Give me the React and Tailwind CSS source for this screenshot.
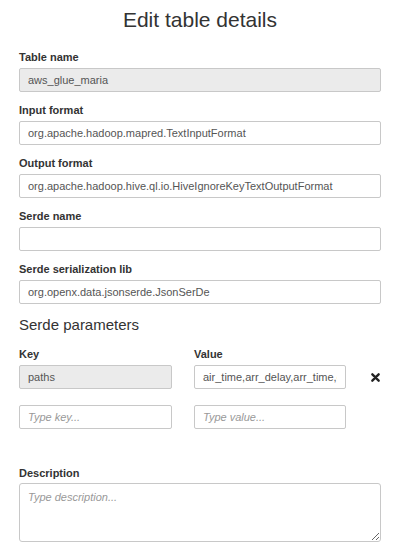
const FIELDS = [
  { label: 'Table name', value: 'aws_glue_maria', disabled: true },
  { label: 'Input format', value: 'org.apache.hadoop.mapred.TextInputFormat' },
  { label: 'Output format', value: 'org.apache.hadoop.hive.ql.io.HiveIgnoreKeyTextOutputFormat' },
  { label: 'Serde name', value: '' },
  { label: 'Serde serialization lib', value: 'org.openx.data.jsonserde.JsonSerDe' },
];

const inputBase =
  'block h-[24px] border border-[#c8c8c8] rounded-[2px] px-[8px] text-[11px] text-[#555] outline-none placeholder:italic placeholder:text-[#999]';

function Label({ children }) {
  return <div className="h-[14px] leading-[14px] text-[11px] font-bold text-[#333]">{children}</div>;
}

function CloseIcon() {
  return (
    <svg width="9" height="9" viewBox="0 0 10 10">
      <path d="M1.5 1.5 L8.5 8.5 M8.5 1.5 L1.5 8.5" stroke="#222" strokeWidth="2.6" strokeLinecap="round" />
    </svg>
  );
}

export default function App() {
  return (
    <div className="w-[400px] h-[546px] bg-white px-[19px] font-['Liberation_Sans',Arial,sans-serif] overflow-hidden">
      <h1 className="pt-[7px] h-[50px] text-center text-[21px] leading-[26px] text-[#333]">Edit table details</h1>

      {FIELDS.map((f) => (
        <div key={f.label} className="h-[53px]">
          <Label>{f.label}</Label>
          <input
            readOnly
            value={f.value}
            className={`${inputBase} mt-[4px] w-[362px] ${f.disabled ? 'bg-[#ebebeb]' : 'bg-white'}`}
          />
        </div>
      ))}

      <div className="h-[32px] text-[15px] leading-[20px] text-[#333]">Serde parameters</div>

      <div className="flex gap-[22px]">
        <div className="w-[153px]">
          <Label>Key</Label>
        </div>
        <div className="w-[152px]">
          <Label>Value</Label>
        </div>
      </div>

      <div className="mt-[4px] flex items-center gap-[22px]">
        <input readOnly value="paths" className={`${inputBase} w-[153px] bg-[#ebebeb]`} />
        <input readOnly value="air_time,arr_delay,arr_time,carrier,dep_delay" className={`${inputBase} w-[152px] bg-white`} />
        <div className="ml-[3px] flex items-center">
          <CloseIcon />
        </div>
      </div>

      <div className="mt-[16px] flex gap-[22px]">
        <input readOnly placeholder="Type key..." className={`${inputBase} w-[153px] bg-white`} />
        <input readOnly placeholder="Type value..." className={`${inputBase} w-[152px] bg-white`} />
      </div>

      <div className="mt-[37px]">
        <Label>Description</Label>
        <textarea
          readOnly
          placeholder="Type description..."
          className="mt-[3px] block w-[362px] h-[59px] border border-[#c8c8c8] rounded-[3px] px-[8px] py-[5px] text-[11px] text-[#555] outline-none placeholder:italic placeholder:text-[#999]"
        />
      </div>
    </div>
  );
}
